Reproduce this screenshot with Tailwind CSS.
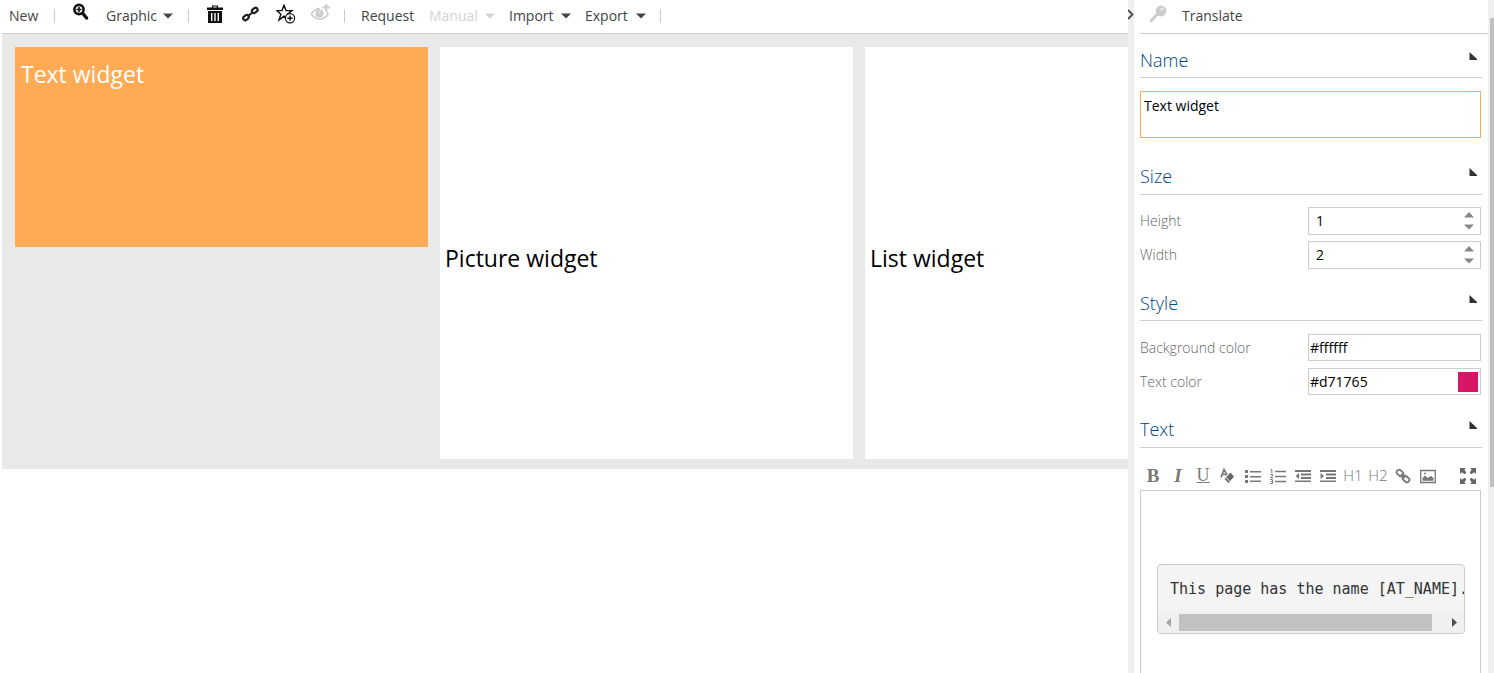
<!DOCTYPE html>
<html lang="en">
<head>
<meta charset="utf-8">
<title>Widget editor</title>
<script src="https://cdn.jsdelivr.net/npm/@tailwindcss/browser@4"></script>
</head>
<body class="bg-white font-['Open_Sans',sans-serif] text-sm text-[#444]">
<svg class="hidden">
  <symbol id="caret" viewBox="0 0 10 6"><path d="M0 0.5H10L5 5.5Z" fill="currentColor"/></symbol>
  <symbol id="fold" viewBox="0 0 8 8"><path d="M0.5 0L8 7V8H0.5Z" fill="currentColor"/></symbol>
  <symbol id="spin" viewBox="0 0 10 6"><path d="M5 0L10 5.5H0Z" fill="currentColor"/></symbol>
</svg>
<div class="flex h-screen overflow-hidden">
  <main class="flex min-w-0 flex-1 flex-col overflow-hidden pl-[2px]">
    <nav class="flex h-[34px] shrink-0 items-center border-b border-[#cfcfcf] pb-[2px] pl-[7px] leading-[30px]">
      <button class="w-[31px] text-left">New</button>
      <span class="ml-[14px] h-[14px] w-px bg-[#ccc]"></span>
      <button class="mb-2 ml-[18px]" aria-label="Zoom">
        <svg class="h-[18px] w-[17px]" viewBox="0 0 17 18" fill="none" stroke="#111"><circle cx="6" cy="6.5" r="4.6" stroke-width="2.6"/><path d="M9.8 10.5L13.6 15" stroke-width="3.4" stroke-linecap="round"/><path d="M3.5 6.5H8.5M6 4V9" stroke-width="1.6"/></svg>
      </button>
      <button class="ml-4 flex w-[67px] items-center justify-between">Graphic<svg class="h-[6px] w-[10px]"><use href="#caret"/></svg></button>
      <span class="ml-[15px] h-[14px] w-px bg-[#ccc]"></span>
      <button class="mb-1 ml-[18px]" aria-label="Delete">
        <svg class="h-[18px] w-4" viewBox="0 0 16 18" fill="#111"><path d="M0 2.5H5V0.5H11V2.5H16V5H0ZM6.3 1.6V2.5H9.7V1.6Z"/><path fill-rule="evenodd" d="M1 6H15V18H1ZM4 8V16H5.4V8ZM7.3 8V16H8.7V8ZM10.6 8V16H12V8Z"/></svg>
      </button>
      <button class="mb-1 ml-[19px]" aria-label="Link">
        <svg class="h-[18px] w-[17px]" viewBox="0 0 17 18" fill="none" stroke="#222" stroke-width="2.2"><rect x="-3" y="-2" width="6" height="4" rx="2" transform="translate(4 12.6) rotate(-38)"/><rect x="-3" y="-2" width="6" height="4" rx="2" transform="translate(12.8 5.4) rotate(-38)"/><path d="M6 11L11 7"/></svg>
      </button>
      <button class="mb-1 ml-[17px]" aria-label="Add to favourites">
        <svg class="h-5 w-5" viewBox="0 0 20 20" fill="none" stroke="#111" stroke-width="1.4"><path d="M8 1.2L10 6.6H15.8L11.5 10.2L12.6 15L8 12.2L3 16L4.9 10.2L0.8 6.6H6Z" stroke-linejoin="miter"/><circle cx="14" cy="14.2" r="4.6" fill="#fff" stroke-width="1.2"/><path d="M11.4 14.2H16.6M14 11.6V16.8"/></svg>
      </button>
      <button class="mb-2 ml-[14px]" aria-label="Watch" disabled>
        <svg class="h-[18px] w-5" viewBox="0 0 20 18" fill="none" stroke="#ccc"><path d="M1 11Q5 5.5 10 5.5M18.5 11Q14.5 16 10 16T1 11" stroke-width="1.6"/><circle cx="9.5" cy="10.5" r="4" fill="#ccc" stroke="none"/><path d="M9 10.5A2 2 0 0 1 10.5 8.5" stroke="#fff" stroke-width="1"/><path d="M12.5 4.5H20M16.2 1V8.3" stroke-width="2.2"/><path d="M18.5 11Q17.5 9.5 16.5 9" stroke-width="1.6"/></svg>
      </button>
      <span class="ml-[14px] h-[14px] w-px bg-[#ccc]"></span>
      <button class="ml-4 w-[54px] text-left">Request</button>
      <button class="ml-[14px] flex w-[66px] items-center justify-between text-[#d4d4d4]" disabled>Manual<svg class="h-[6px] w-[10px]"><use href="#caret"/></svg></button>
      <button class="ml-[14px] flex w-[62px] items-center justify-between">Import<svg class="h-[6px] w-[10px]"><use href="#caret"/></svg></button>
      <button class="ml-[14px] flex w-[61px] items-center justify-between">Export<svg class="h-[6px] w-[10px]"><use href="#caret"/></svg></button>
      <span class="ml-[14px] h-[14px] w-px bg-[#ccc]"></span>
    </nav>
    <div class="grid grid-cols-[413px_413px_413px] items-start gap-x-3 bg-[#e9e9e9] pt-[13px] pb-[10px] pl-[13px] text-[23px] leading-8">
      <section class="h-[200px] bg-[#ffaa55] px-[6px] pt-[11px] text-white">Text widget</section>
      <section class="h-[412px] bg-white px-[5px] pt-[195px] text-black">Picture widget</section>
      <section class="h-[412px] bg-white px-[5px] pt-[195px] text-black">List widget</section>
    </div>
  </main>
  <div class="relative w-[6px] shrink-0 bg-[#efefef]">
    <svg class="absolute top-[9px] left-0 h-[11px] w-[6px]" viewBox="0 0 6 11" fill="none" stroke="#555" stroke-width="2"><path d="M0 1L4.5 5.5L0 10"/></svg>
  </div>
  <aside class="w-[354px] shrink-0 overflow-hidden pl-[6px]">
    <div class="flex h-[34px] items-center border-b border-[#cfcfcf] pb-[2px] pl-[9px]">
      <svg class="mb-1 h-[18px] w-[18px]" viewBox="0 0 18 18"><circle cx="12" cy="6" r="5.4" fill="#ccc"/><path d="M9 8.5L1.5 16.5" stroke="#ccc" stroke-width="3"/><path d="M11.5 4.8L14 3.2" stroke="#f4f4f4" stroke-width="1.6"/></svg>
      <button class="ml-[15px]">Translate</button>
    </div>
    <div class="flex h-[calc(100vh-34px)] flex-col pr-[6px]">
      <h2 class="flex h-11 shrink-0 items-center justify-between border-b border-[#cfcfcf] pt-2 pr-[5px] text-lg font-light text-[#004680]"><label for="name">Name</label><svg class="mb-2 h-2 w-2 text-[#333]"><use href="#fold"/></svg></h2>
      <textarea id="name" class="mt-[13px] mr-px block h-[47px] shrink-0 resize-none border border-[#ffaa55] px-[3px] pt-1 leading-5 text-black outline-none">Text widget</textarea>

      <h2 class="mt-[13px] flex h-11 shrink-0 items-center justify-between border-b border-[#cfcfcf] pt-[6px] pr-[5px] text-lg font-light text-[#004680]">Size<svg class="mb-2 h-2 w-2 text-[#333]"><use href="#fold"/></svg></h2>
      <div class="mt-3 mr-px flex shrink-0 flex-col gap-[6px] font-light text-[#666]">
        <div class="flex h-7 justify-between leading-7"><label for="height">Height</label>
          <div class="flex w-[173px] items-center border border-[#ccc] pr-[6px]"><input id="height" type="text" inputmode="numeric" value="1" class="min-w-0 flex-1 px-[7px] font-normal text-black outline-none"><div class="flex flex-col gap-[6px] text-[#888]"><button class="block" aria-label="Increase height"><svg class="block h-[6px] w-[10px]"><use href="#spin"/></svg></button><button class="block" aria-label="Decrease height"><svg class="block h-[6px] w-[10px]"><use href="#caret"/></svg></button></div></div>
        </div>
        <div class="flex h-7 justify-between leading-7"><label for="width">Width</label>
          <div class="flex w-[173px] items-center border border-[#ccc] pr-[6px]"><input id="width" type="text" inputmode="numeric" value="2" class="min-w-0 flex-1 px-[7px] font-normal text-black outline-none"><div class="flex flex-col gap-[6px] text-[#888]"><button class="block" aria-label="Increase width"><svg class="block h-[6px] w-[10px]"><use href="#spin"/></svg></button><button class="block" aria-label="Decrease width"><svg class="block h-[6px] w-[10px]"><use href="#caret"/></svg></button></div></div>
        </div>
      </div>

      <h2 class="mt-2 flex h-11 shrink-0 items-center justify-between border-b border-[#cfcfcf] pt-2 pr-[5px] text-lg font-light text-[#004680]">Style<svg class="mb-2 h-2 w-2 text-[#333]"><use href="#fold"/></svg></h2>
      <div class="mt-[13px] mr-px flex shrink-0 flex-col gap-[7px] font-light text-[#666]">
        <div class="flex h-[27px] justify-between"><label for="bg" class="pt-1">Background color</label><input id="bg" type="text" value="#ffffff" class="w-[173px] border border-[#ccc] px-px font-normal text-black outline-none"></div>
        <div class="flex h-[27px] justify-between"><label for="fg" class="pt-1">Text color</label>
          <div class="flex w-[173px] items-center border border-[#ccc] pr-[2px]"><input id="fg" type="text" value="#d71765" class="min-w-0 flex-1 px-px font-normal text-black outline-none"><button class="h-5 w-5 bg-[#d71765]" aria-label="Pick text color"></button></div>
        </div>
      </div>

      <h2 class="mt-[9px] flex h-11 shrink-0 items-center justify-between border-b border-[#cfcfcf] pt-[6px] pr-[5px] text-lg font-light text-[#004680]">Text<svg class="mb-2 h-2 w-2 text-[#333]"><use href="#fold"/></svg></h2>
      <div class="mt-[14px] mr-px flex h-7 shrink-0 items-center justify-between pr-[5px] pl-[5px] text-[#777]">
        <div class="flex items-center gap-[9px]">
          <button class="w-4 font-['Liberation_Serif',serif] text-[19px] font-bold">B</button>
          <button class="w-4 font-['Liberation_Serif',serif] text-[19px] font-bold italic">I</button>
          <button class="w-4 font-['Liberation_Serif',serif] text-[18px] underline">U</button>
          <button aria-label="Clear formatting"><svg class="block h-4 w-4" viewBox="0 0 16 16"><path d="M1 9.5L4 1.5L7 7M2.2 6.5H6" fill="none" stroke="currentColor" stroke-width="1.7"/><path d="M10.5 4.5L14 8.5L8.5 15L4.5 11Z" fill="#666"/><path d="M6 9.4L9.8 13.4" stroke="#eee"/></svg></button>
          <button aria-label="Bulleted list"><svg class="block h-4 w-4" viewBox="0 0 16 16" fill="currentColor"><path d="M0 2H3V5H0ZM0 7H3V10H0ZM0 12H3V15H0ZM5 3H16V4.5H5ZM5 8H16V9.5H5ZM5 12.5H16V14H5Z"/></svg></button>
          <button aria-label="Numbered list"><svg class="block h-4 w-4" viewBox="0 0 16 16" fill="none" stroke="currentColor"><path d="M5 3.5H16M5 8.5H16M5 13.5H16" stroke-width="1.5"/><path d="M0.5 1.5H1.8V5M0.3 6.5H2.5V8L0.5 9.7H3M0.3 11.5H2.5V15.5H0.3M1 13.5H2.5"/></svg></button>
          <button aria-label="Outdent"><svg class="block h-4 w-4" viewBox="0 0 16 16" fill="currentColor"><path d="M0 2H16V4H0ZM6 5.5H16V7.5H6ZM6 9H16V11H6ZM0 12.5H16V14H0ZM4 5V11L0.5 8Z"/></svg></button>
          <button aria-label="Indent"><svg class="block h-4 w-4" viewBox="0 0 16 16" fill="currentColor"><path d="M0 2H16V4H0ZM6 5.5H16V7.5H6ZM6 9H16V11H6ZM0 12.5H16V14H0ZM0.5 5V11L4 8Z"/></svg></button>
          <button class="flex w-4 justify-center text-[15px] font-light whitespace-nowrap">H1</button>
          <button class="flex w-4 justify-center text-[15px] font-light whitespace-nowrap">H2</button>
          <button aria-label="Insert link"><svg class="block h-4 w-4" viewBox="0 0 16 16" fill="none" stroke="currentColor" stroke-width="1.8"><rect x="-3.6" y="-2.4" width="7.2" height="4.8" rx="2.2" transform="translate(5 5) rotate(42)"/><rect x="-3.6" y="-2.4" width="7.2" height="4.8" rx="2.2" transform="translate(11 11) rotate(42)"/><path d="M6 6L10 10"/></svg></button>
          <button aria-label="Insert picture"><svg class="block h-4 w-4" viewBox="0 0 16 16"><path d="M0.7 2.5H15.3V14.5H0.7Z" fill="none" stroke="currentColor" stroke-width="1.3"/><path d="M2.5 12.8V10L5 7.5L7.5 10L11 8L13.5 10V12.8Z" fill="currentColor"/><circle cx="5" cy="5.5" r="1" fill="currentColor"/></svg></button>
        </div>
        <button aria-label="Full screen"><svg class="block h-4 w-4" viewBox="0 0 16 16" fill="#666"><path d="M0 0H6L4.3 1.8L6.4 4.4L4.6 6.2L1.9 4.2L0 6ZM16 0V6L14.1 4.2L11.4 6.2L9.6 4.4L11.7 1.8L10 0ZM0 16V10L1.9 11.8L4.6 9.8L6.4 11.6L4.3 14.2L6 16ZM16 16H10L11.7 14.2L9.6 11.6L11.4 9.8L14.1 11.8L16 10Z"/></svg></button>
      </div>
      <div class="mr-px min-h-[190px] flex-1 border border-b-0 border-[#ccc] pt-[73px] pr-[15px] pl-4">
        <div class="overflow-hidden rounded border border-[#ccc] bg-[#f4f4f4]">
          <pre class="h-[47px] overflow-hidden pt-[14px] pl-3 font-['DejaVu_Sans_Mono',monospace] text-[15px] leading-5 text-[#333]">This page has the name [AT_NAME].</pre>
          <div class="flex h-[21px] items-center bg-[#f0f0f0] pr-[7px] pl-2">
            <svg class="h-[9px] w-[5px]" viewBox="0 0 5 9"><path d="M5 0V9L0 4.5Z" fill="#a3a3a3"/></svg>
            <div class="mr-5 ml-2 h-[17px] flex-1 bg-[#c1c1c1]"></div>
            <svg class="h-[9px] w-[5px]" viewBox="0 0 5 9"><path d="M0 0V9L5 4.5Z" fill="#505050"/></svg>
          </div>
        </div>
      </div>
    </div>
  </aside>
  <div class="w-[6px] shrink-0 bg-[#f0f0f0] pt-[18px] pl-[2px]"><div class="h-[469px] bg-[#c1c1c1]"></div></div>
</div>
</body>
</html>
